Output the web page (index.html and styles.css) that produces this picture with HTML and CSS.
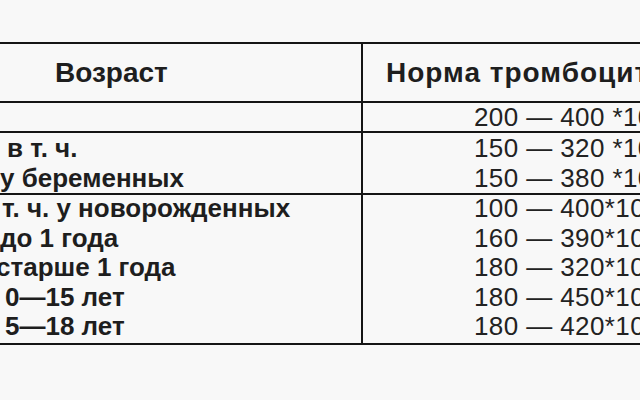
FILE: index.html
```html
<!DOCTYPE html>
<html lang="ru">
<head>
<meta charset="utf-8">
<link rel="stylesheet" href="styles.css">
</head>
<body>
<div class="table">
  <div class="row head">
    <div class="cell left"><span class="h-age">Возраст</span></div>
    <div class="cell right"><span class="h-norm">Норма тромбоцитов</span></div>
  </div>
  <div class="row r1">
    <div class="cell left"></div>
    <div class="cell right num"><div>200 — 400 *10⁹/л</div></div>
  </div>
  <div class="row r2">
    <div class="cell left txt">
      <div class="ind7">в т. ч.</div>
      <div class="ind0">у беременных</div>
    </div>
    <div class="cell right num">
      <div>150 — 320 *10⁹/л</div>
      <div>150 — 380 *10⁹/л</div>
    </div>
  </div>
  <div class="row r3">
    <div class="cell left txt">
      <div class="ind2">т. ч. у новорожденных</div>
      <div class="ind0">до 1 года</div>
      <div class="indneg">старше 1 года</div>
      <div class="ind5">0—15 лет</div>
      <div class="ind5">5—18 лет</div>
    </div>
    <div class="cell right num">
      <div>100 — 400*10⁹/л</div>
      <div>160 — 390*10⁹/л</div>
      <div>180 — 320*10⁹/л</div>
      <div>180 — 450*10⁹/л</div>
      <div>180 — 420*10⁹/л</div>
    </div>
  </div>
</div>
</body>
</html>
```
FILE: styles.css
```css
html, body {
  margin: 0;
  padding: 0;
}
body {
  width: 640px;
  height: 400px;
  overflow: hidden;
  background: #f8f8f8;
  font-family: "Liberation Sans", Arial, sans-serif;
  color: #1e1e1e;
}
.table {
  width: 840px;
  margin-top: 42px;
  border-top: 2px solid #151515;
}
.row {
  display: flex;
  border-bottom: 2px solid #151515;
}
.cell {
  white-space: nowrap;
  overflow: hidden;
}
.left {
  width: 361px;
  flex: none;
  border-right: 2px solid #151515;
}
.right {
  flex: 1;
}
.head {
  height: 57px;
  align-items: center;
}
.head .cell {
  height: 57px;
  display: flex;
  align-items: center;
  font-weight: bold;
  font-size: 28px;
}
.h-age {
  padding-left: 55px;
}
.h-norm {
  padding-left: 23px;
  letter-spacing: 1px;
}
.r1 {
  height: 28px;
}
.r2 {
  height: 60px;
}
.r3 {
  height: 148px;
}
.num {
  font-size: 26px;
  letter-spacing: 0.4px;
  padding-left: 111px;
  color: #222;
}
.r1 .num {
  line-height: 28px;
}
.r2 .cell {
  line-height: 30px;
}
.r3 .cell {
  line-height: 29.6px;
  margin-top: -1px;
}
.txt {
  font-weight: bold;
  font-size: 26px;
}
.ind0 { padding-left: 0; }
.ind2 { padding-left: 2px; }
.ind5 { padding-left: 5px; }
.ind7 { padding-left: 7px; }
.indneg { margin-left: -4px; }
```
